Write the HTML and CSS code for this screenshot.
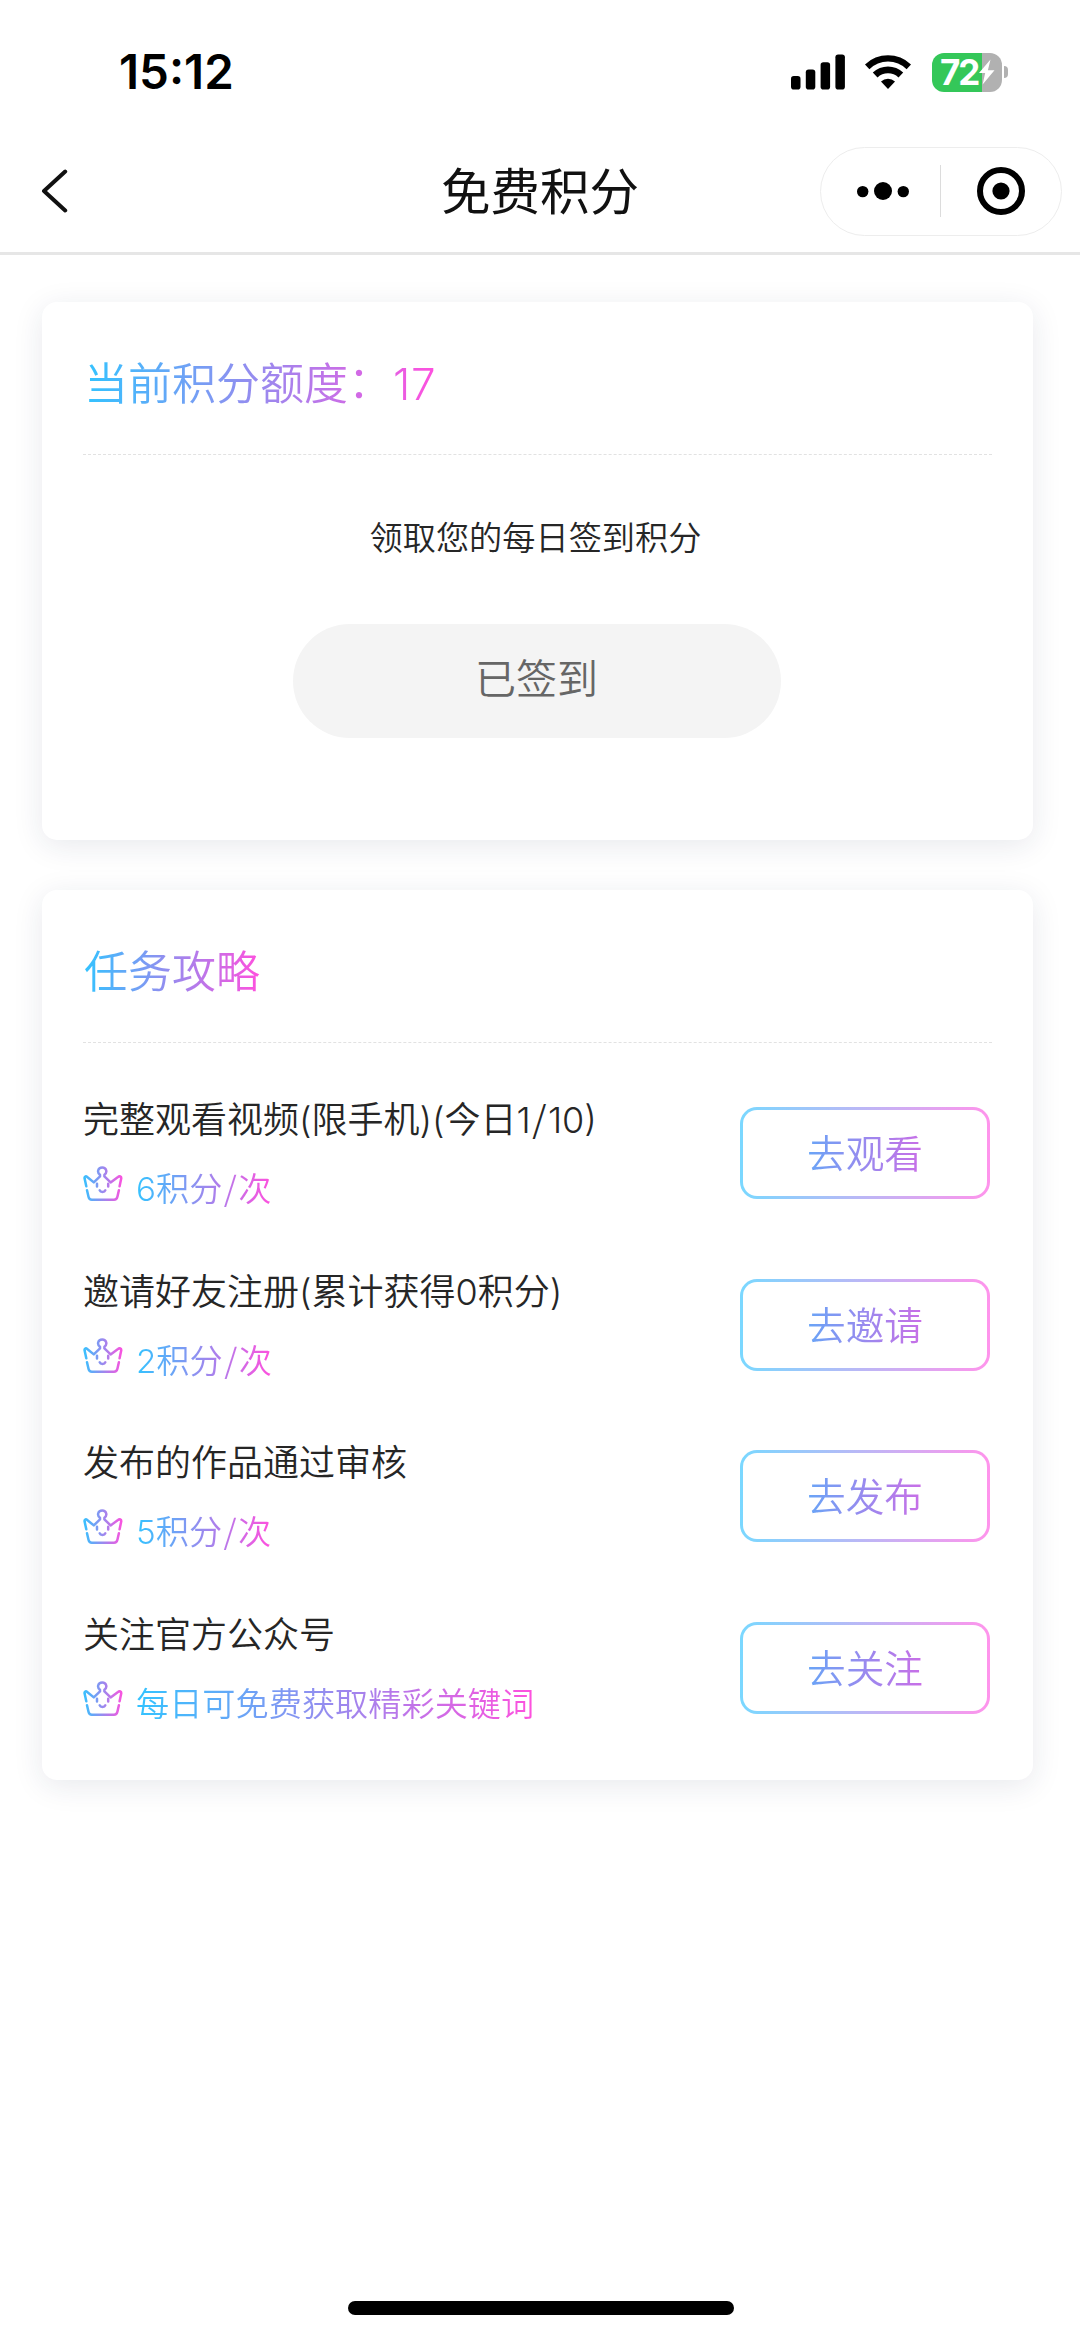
FILE: index.html
```html
<!DOCTYPE html>
<html lang="zh-CN">
<head>
<meta charset="utf-8">
<title>免费积分</title>
<link rel="stylesheet" href="styles.css">
</head>
<body>
<svg class="defs" aria-hidden="true">
  <defs>
    <linearGradient id="brand" gradientUnits="userSpaceOnUse" x1="0" y1="0" x2="40" y2="0">
      <stop offset="0" stop-color="#33c3ff"/>
      <stop offset="1" stop-color="#ff50de"/>
    </linearGradient>
    <symbol id="crown" viewBox="0 0 40 36">
      <g fill="none" stroke="url(#brand)" stroke-width="2.5" stroke-linecap="round" stroke-linejoin="round">
        <path d="M3.3 20.3 1.6 12.6C1.200 10.400 2.800 9.800 4.200 11L10.800 16.400 17 10.400V8.700C13.700 6.400 14.900 1.500 19.200 1.500S24.700 6.400 21.400 8.700V10.400L27.600 16.400 35 11C36.500 9.800 38.600 10.400 38.200 12.600L36.600 20.300"/>
        <path d="M4 24.300 5.500 30.800C6 33 6.700 33.800 8.800 33.800H31C33.200 33.800 33.900 33 34.400 30.800L35.900 24.300"/>
        <path d="M14 17.800V20.400M25.200 17.800V20.400M16.700 24.400C17.500 26.600 21.500 26.600 22.300 24.400"/>
      </g>
    </symbol>
  </defs>
</svg>

<header class="status">
  <span class="clock">15:12</span>
  <div class="indicators">
    <svg class="signal" width="54" height="36" viewBox="0 0 54 36">
      <rect x="0" y="22" width="9.500" height="13.500" rx="2.800"/>
      <rect x="14.800" y="15.500" width="9.500" height="20" rx="2.800"/>
      <rect x="29.600" y="8.300" width="9.500" height="27.200" rx="2.800"/>
      <rect x="44.400" y="0.500" width="9.500" height="35" rx="2.800"/>
    </svg>
    <svg class="wifi" width="48" height="36" viewBox="0 0 48 36">
      <path d="M1 10.500A33 33 0 0 1 47 10.500L42.600 15.200A26.500 26.500 0 0 0 5.400 15.200Z"/>
      <path d="M8.800 18.600A22 22 0 0 1 39.200 18.600L34.500 23.500A15.300 15.300 0 0 0 13.500 23.500Z"/>
      <path d="M17 27.400A10.600 10.600 0 0 1 31 27.400L24 35Z"/>
    </svg>
    <div class="battery">
      <div class="battery-body">
        <span class="battery-value">72</span>
        <svg width="17" height="26" viewBox="0 0 17 26"><path d="M12.500.5 1 14H7.200L4.600 25.500 16.500 11.300H9.900Z" fill="#fff"/></svg>
      </div>
      <div class="battery-cap"></div>
    </div>
  </div>
</header>

<nav class="nav">
  <svg class="back" width="28" height="44" viewBox="0 0 28 44"><path d="M25.200 2.500 4 22 25.200 41.500" fill="none" stroke="#111" stroke-width="4" stroke-linecap="round" stroke-linejoin="round"/></svg>
  <h1 class="nav-title">免费积分</h1>
  <div class="capsule">
    <svg class="more" width="52" height="18" viewBox="0 0 52 18"><circle cx="5.700" cy="9.600" r="5.700"/><circle cx="26" cy="9" r="9"/><circle cx="46.300" cy="9.600" r="5.700"/></svg>
    <span class="capsule-line"></span>
    <svg class="close" width="48" height="48" viewBox="0 0 48 48"><circle cx="24" cy="24" r="21" fill="none" stroke="#000" stroke-width="6"/><circle cx="24" cy="24" r="8.600"/></svg>
  </div>
</nav>

<main class="page">
  <section class="card checkin">
    <div class="card-head"><h2 class="card-title brand-text">当前积分额度<span class="colon">：</span><span class="points">17</span></h2></div>
    <p class="checkin-note">领取您的每日签到积分</p>
    <button class="checkin-button">已签到</button>
  </section>

  <section class="card tasks">
    <div class="card-head"><h2 class="card-title brand-text">任务攻略</h2></div>
    <ul class="task-list">
      <li class="task">
        <div class="task-info">
          <h3 class="task-name">完整观看视频(限手机)(今日1<span class="slash">/</span>10)</h3>
          <div class="reward"><svg class="crown"><use href="#crown"/></svg><span class="brand-text">6积分<span class="slash">/</span>次</span></div>
        </div>
        <button class="go"><span class="go-label">去观看</span></button>
      </li>
      <li class="task">
        <div class="task-info">
          <h3 class="task-name">邀请好友注册(累计获得0积分)</h3>
          <div class="reward"><svg class="crown"><use href="#crown"/></svg><span class="brand-text">2积分<span class="slash">/</span>次</span></div>
        </div>
        <button class="go"><span class="go-label">去邀请</span></button>
      </li>
      <li class="task">
        <div class="task-info">
          <h3 class="task-name">发布的作品通过审核</h3>
          <div class="reward"><svg class="crown"><use href="#crown"/></svg><span class="brand-text">5积分<span class="slash">/</span>次</span></div>
        </div>
        <button class="go"><span class="go-label">去发布</span></button>
      </li>
      <li class="task">
        <div class="task-info">
          <h3 class="task-name">关注官方公众号</h3>
          <div class="reward"><svg class="crown"><use href="#crown"/></svg><span class="brand-text">每日可免费获取精彩关键词</span></div>
        </div>
        <button class="go"><span class="go-label">去关注</span></button>
      </li>
    </ul>
  </section>
</main>

<footer class="home"><span class="home-bar"></span></footer>
</body>
</html>
```
FILE: styles.css
```css
:root {
  --brand: linear-gradient(90deg, #33c3ff, #ff50de);
  --brand-soft: linear-gradient(90deg, #7ad8ff, #ff94ec);
}

* { box-sizing: border-box; margin: 0; padding: 0; }

body {
  width: 1080px;
  height: 2337px;
  display: flex;
  flex-direction: column;
  overflow: hidden;
  background: #fff;
  color: #262626;
  font-family: Inter, "Noto Sans CJK SC", sans-serif;
  font-weight: 350;
}

h1, h2, h3 { font-weight: inherit; }
button { border: 0; font: inherit; }
ul { list-style: none; }
svg { display: block; flex: none; }
.defs { position: absolute; width: 0; height: 0; }

.brand-text {
  background: var(--brand);
  -webkit-background-clip: text;
  background-clip: text;
  color: transparent;
}

/* Status bar */
.status {
  flex: none;
  height: 132px;
  padding: 12px 72px 0 119px;
  display: flex;
  justify-content: space-between;
  align-items: center;
}
.clock {
  font-size: 47.500px;
  font-weight: 600;
  line-height: 60px;
  color: #000;
}
.indicators { display: flex; align-items: center; }
.wifi { margin-left: 19px; }
.battery { display: flex; align-items: center; margin-left: 20px; }
.battery-body {
  width: 70px;
  height: 39px;
  padding-left: 8px;
  display: flex;
  align-items: center;
  border-radius: 12px;
  background: linear-gradient(90deg, #34c759 50px, #b1b1b1 50px);
}
.battery-value {
  width: 38px;
  color: #fff;
  font-size: 35px;
  font-weight: 700;
  line-height: 39px;
  letter-spacing: -2px;
}
.battery-cap {
  width: 4px;
  height: 12px;
  margin-left: 2px;
  border-radius: 0 5px 5px 0;
  background: #b1b1b1;
}

/* Navigation bar */
.nav {
  flex: none;
  height: 123px;
  padding: 0 18px 2px 40px;
  display: grid;
  grid-template-columns: 1fr auto 1fr;
  align-items: center;
  border-bottom: 3px solid #e6e6e6;
}
.nav-title {
  padding-top: 1px;
  color: #111;
  font-size: 49.500px;
  font-weight: 400;
  line-height: 70px;
  margin-left: -22px;
}
.capsule {
  justify-self: end;
  width: 242px;
  height: 89px;
  display: flex;
  align-items: center;
  border: 1px solid #ededed;
  border-radius: 45px;
}
.more { margin-left: 36px; }
.capsule-line { width: 1px; height: 52px; margin-left: 31px; background: #dcdcdc; }
.close { margin-left: 36px; }

/* Cards */
.page {
  flex: 1;
  padding: 47px 47px 0 42px;
  display: flex;
  flex-direction: column;
  gap: 50px;
}
.card {
  padding: 0 41px;
  border-radius: 15px;
  background: #fff;
  box-shadow: 0 6px 30px rgba(30, 40, 80, 0.1);
}
.card-head {
  height: 153px;
  padding: 52px 0 0 1px;
  border-bottom: 1px dashed #e2e2e2;
}
.card-title {
  width: max-content;
  font-size: 44px;
  line-height: 60px;
}
.colon { vertical-align: 2px; line-height: 0; }
.points { margin-left: 1px; letter-spacing: 0.8px; }

.checkin {
  height: 538px;
  display: flex;
  flex-direction: column;
}
.checkin-note {
  margin-top: 58px;
  padding-right: 4px;
  font-size: 33.200px;
  line-height: 50px;
  text-align: center;
}
.checkin-button {
  align-self: center;
  width: 488px;
  height: 114px;
  margin: 61px 2px 0 0;
  padding-bottom: 10px;
  border-radius: 57px;
  background: #f4f4f4;
  color: #666;
  font-size: 41px;
}

/* Tasks */
.tasks { height: 890px; }
.task-list { padding-top: 24px; }
.task {
  height: 171.700px;
  display: flex;
  justify-content: space-between;
  align-items: center;
}
.task-info { display: flex; flex-direction: column; gap: 22px; }
.task-name { font-size: 36px; line-height: 50px; }
.slash { padding: 0 1.500px; font-family: "Noto Sans CJK SC", sans-serif; line-height: 0; }
.reward {
  display: flex;
  align-items: flex-start;
  gap: 13px;
  font-size: 33.200px;
  line-height: 44px;
}
.crown { width: 40px; height: 36px; margin-top: -1px; }
.go {
  width: 250px;
  height: 92px;
  margin-right: 2px;
  border: 3px solid transparent;
  border-radius: 17px;
  background: linear-gradient(#fff, #fff) padding-box, var(--brand-soft) border-box;
}
.go-label {
  display: block;
  padding-top: 2px;
  background: var(--brand);
  -webkit-background-clip: text;
  background-clip: text;
  color: transparent;
  font-size: 38.700px;
  line-height: 84px;
}

/* Home indicator */
.home { flex: none; height: 36px; padding-left: 1px; display: flex; justify-content: center; }
.home-bar { width: 386px; height: 14px; border-radius: 7px; background: #000; }
```
